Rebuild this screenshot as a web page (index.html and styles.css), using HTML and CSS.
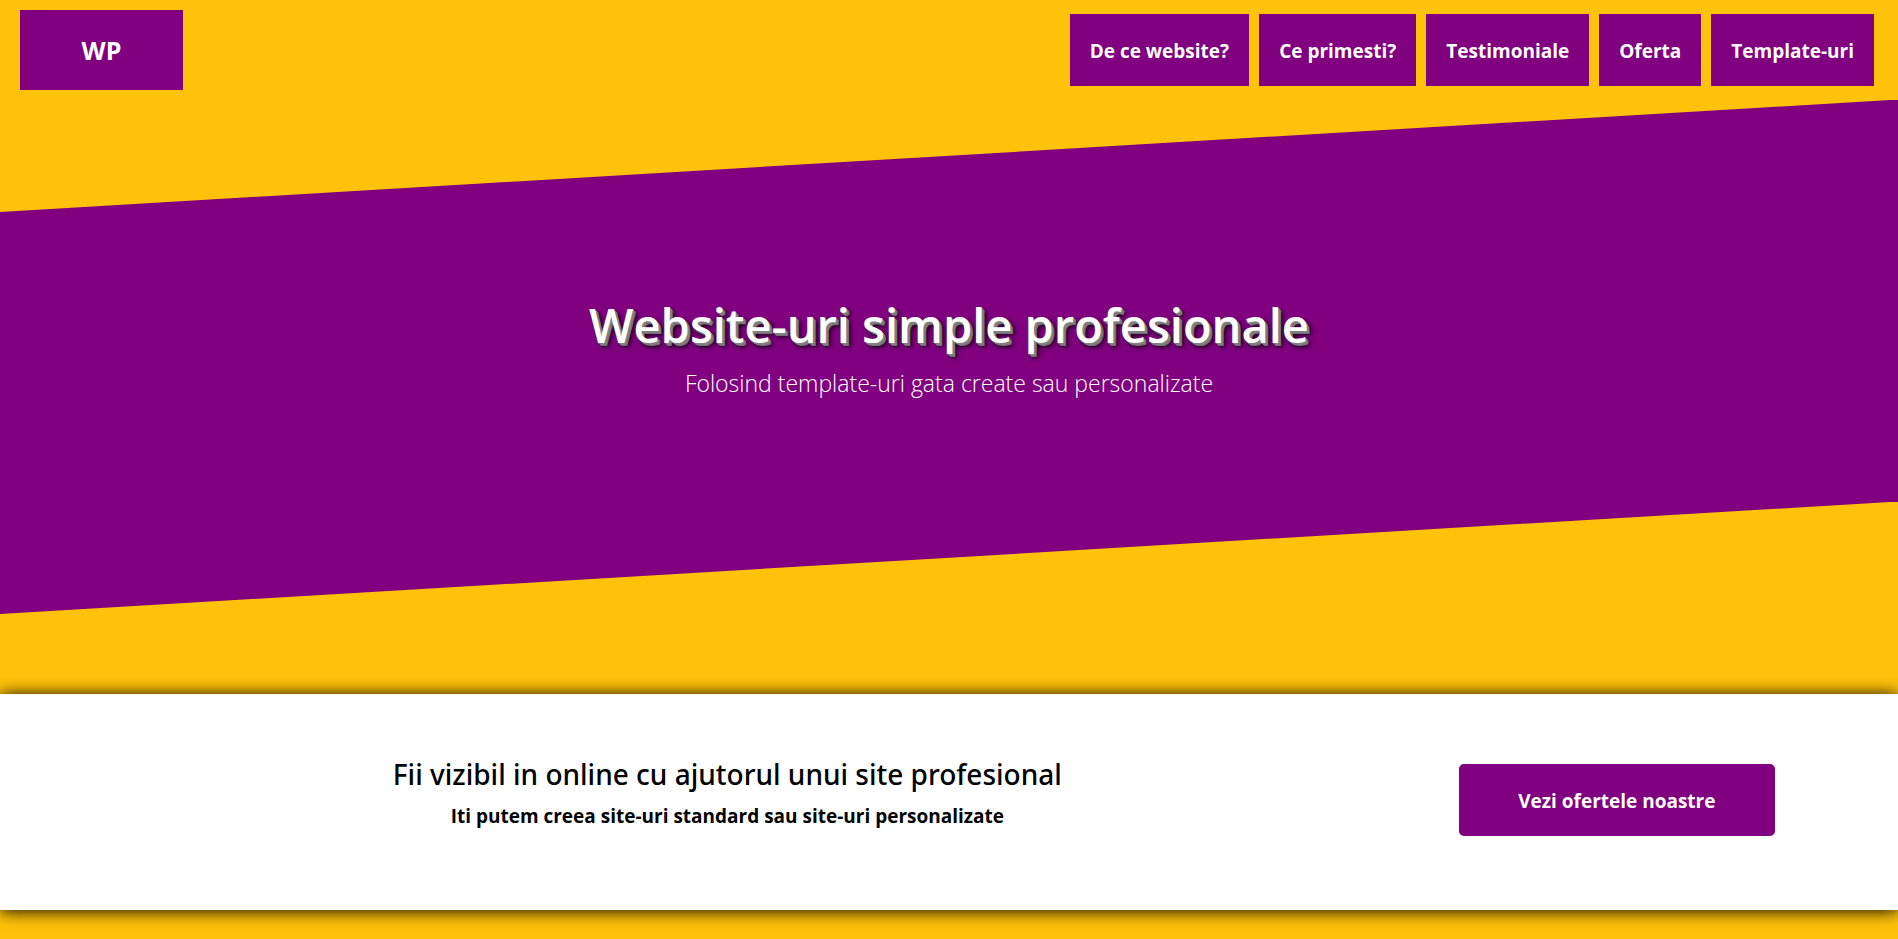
FILE: index.html
```html
<!DOCTYPE html>
<html lang="ro">
<head>
<meta charset="utf-8">
<meta name="viewport" content="width=device-width, initial-scale=1">
<title>Website-uri simple profesionale</title>
<link rel="stylesheet" href="styles.css">
</head>
<body>
<header class="header">
  <a class="logo" href="#">WP</a>
  <nav class="nav">
    <a class="nav-link" href="#de-ce">De ce website?</a>
    <a class="nav-link" href="#ce-primesti">Ce primesti?</a>
    <a class="nav-link" href="#testimoniale">Testimoniale</a>
    <a class="nav-link" href="#oferta">Oferta</a>
    <a class="nav-link" href="#template-uri">Template-uri</a>
  </nav>
</header>
<main>
  <section class="hero">
    <h1 class="hero-title">Website-uri simple profesionale</h1>
    <p class="hero-text">Folosind template-uri gata create sau personalizate</p>
  </section>
  <section class="offer">
    <div class="offer-copy">
      <h2 class="offer-title">Fii vizibil in online cu ajutorul unui site profesional</h2>
      <p class="offer-text">Iti putem creea site-uri standard sau site-uri personalizate</p>
    </div>
    <button class="offer-button" type="button">Vezi ofertele noastre</button>
  </section>
</main>
</body>
</html>
```
FILE: styles.css
```css
* {
  box-sizing: border-box;
}

body {
  margin: 0;
  background: #ffc20a;
  color: #000;
  font-family: "Segoe UI", "Open Sans", "Noto Sans", sans-serif;
}

h1, h2, p {
  margin: 0;
}

.header {
  display: flex;
  align-items: center;
  justify-content: space-between;
  padding: 10px 24px 10px 20px;
}

.logo {
  display: flex;
  align-items: center;
  justify-content: center;
  width: 163px;
  height: 80px;
  background: purple;
  color: #fff;
  font-size: 25px;
  font-weight: 700;
  text-decoration: none;
}

.nav {
  display: flex;
  gap: 10px;
}

.nav-link {
  padding: 23px 20px 21px;
  background: purple;
  color: #fff;
  font-size: 19px;
  font-weight: 700;
  line-height: 28px;
  text-decoration: none;
}

.hero {
  display: flex;
  flex-direction: column;
  align-items: center;
  padding: 191px 20px 213px;
  background: purple;
  clip-path: polygon(0 112px, calc(100% - 8px) 0, 100% 0, 100% calc(100% - 112px), calc(100% - 8px) calc(100% - 112px), 0 100%);
  color: #fff;
  text-align: center;
}

.hero-title {
  font-size: 47px;
  font-weight: 600;
  line-height: 68px;
  text-shadow: 1px 1px 0 #808080, 2px 2px 0 #808080, 3px 3px 0 #707070, 4px 4px 5px #000;
}

.hero-text {
  padding-top: 6px;
  font-size: 23px;
  font-weight: 300;
  line-height: 36px;
}

.offer {
  display: flex;
  align-items: flex-start;
  margin: 80px 0 40px;
  padding: 60px 0 74px;
  background: #fff;
  box-shadow: 0 1px 16px #000;
}

.offer-copy {
  flex: 1;
  padding-right: 4px;
  text-align: center;
}

.offer-title {
  font-family: "Segoe UI", "Noto Sans", "Open Sans", sans-serif;
  font-size: 28px;
  font-weight: 500;
  line-height: 40px;
}

.offer-text {
  padding-top: 8px;
  font-size: 19px;
  font-weight: 700;
  line-height: 28px;
}

.offer-button {
  width: calc(100% / 6);
  margin: 10px 123px 0 0;
  padding: 23px 20px 21px;
  border: 0;
  border-radius: 5px;
  background: purple;
  color: #fff;
  font: 700 19px/28px "Segoe UI", "Open Sans", "Noto Sans", sans-serif;
}
```
